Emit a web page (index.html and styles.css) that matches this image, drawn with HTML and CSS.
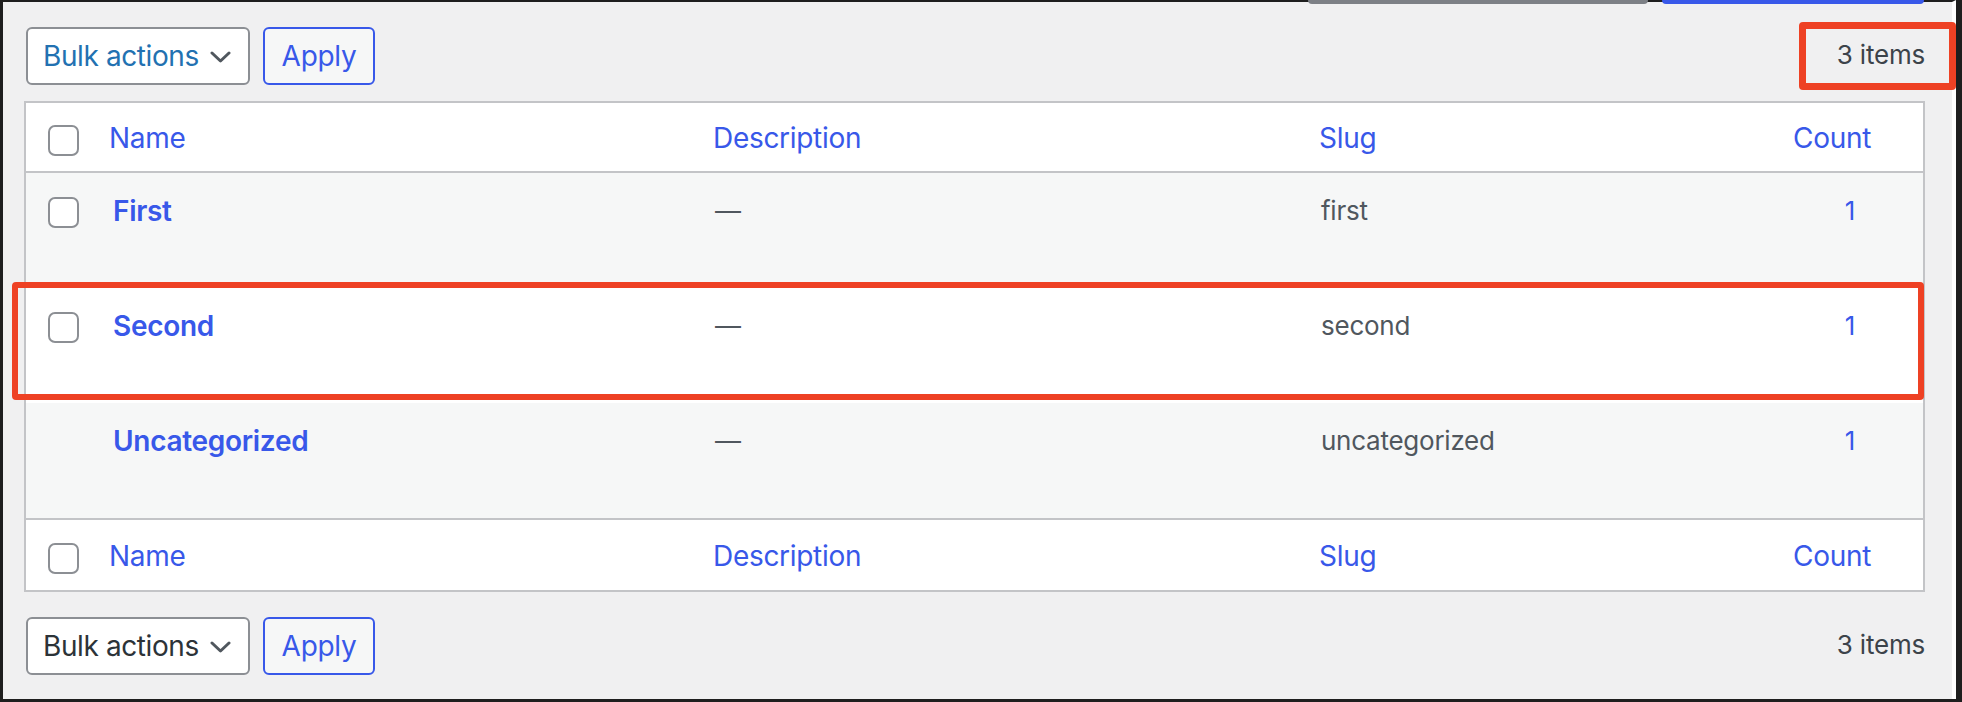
FILE: index.html
```html
<!DOCTYPE html>
<html lang="en">
<head>
<meta charset="utf-8">
<title>Categories</title>
<link rel="stylesheet" href="styles.css">
</head>
<body>
<div class="screen">
  <div class="search-row">
    <div class="search-input"></div>
    <div class="search-btn"></div>
  </div>

  <div class="tablenav tablenav-top">
    <div class="select select-hover">
      <span>Bulk actions</span>
      <svg class="chev" width="21" height="12" viewBox="0 0 21 12"><polyline points="2,2 10.5,10 19,2" fill="none" stroke="#50575e" stroke-width="3" stroke-linecap="round" stroke-linejoin="round"/></svg>
    </div>
    <div class="btn">Apply</div>
    <div class="count-num">3 items</div>
  </div>

  <table class="list">
    <colgroup>
      <col class="c-check"><col class="c-name"><col class="c-desc"><col class="c-slug"><col class="c-count">
    </colgroup>
    <thead>
      <tr>
        <th class="check"><span class="cb"></span></th>
        <th><a>Name</a></th>
        <th><a>Description</a></th>
        <th><a>Slug</a></th>
        <th class="num"><a>Count</a></th>
      </tr>
    </thead>
    <tbody>
      <tr class="alt">
        <td class="check"><span class="cb"></span></td>
        <td class="name"><a class="row-title">First</a></td>
        <td class="muted">—</td>
        <td class="muted">first</td>
        <td class="num"><a>1</a></td>
      </tr>
      <tr>
        <td class="check"><span class="cb"></span></td>
        <td class="name"><a class="row-title">Second</a></td>
        <td class="muted">—</td>
        <td class="muted">second</td>
        <td class="num"><a>1</a></td>
      </tr>
      <tr class="alt">
        <td class="check"></td>
        <td class="name"><a class="row-title">Uncategorized</a></td>
        <td class="muted">—</td>
        <td class="muted">uncategorized</td>
        <td class="num"><a>1</a></td>
      </tr>
    </tbody>
    <tfoot>
      <tr>
        <th class="check"><span class="cb"></span></th>
        <th><a>Name</a></th>
        <th><a>Description</a></th>
        <th><a>Slug</a></th>
        <th class="num"><a>Count</a></th>
      </tr>
    </tfoot>
  </table>

  <div class="tablenav tablenav-bottom">
    <div class="select">
      <span>Bulk actions</span>
      <svg class="chev" width="21" height="12" viewBox="0 0 21 12"><polyline points="2,2 10.5,10 19,2" fill="none" stroke="#50575e" stroke-width="3" stroke-linecap="round" stroke-linejoin="round"/></svg>
    </div>
    <div class="btn">Apply</div>
    <div class="count-num">3 items</div>
  </div>
</div>

<div class="mark mark-count"></div>
<div class="mark mark-row"></div>
</body>
</html>
```
FILE: styles.css
```css
* { box-sizing: border-box; }

html, body {
  margin: 0;
  padding: 0;
  background: #1e1e1e;
}

body {
  font-family: Inter, "Noto Sans", "Liberation Sans", sans-serif;
  width: 1962px;
  height: 702px;
  overflow: hidden;
}

.screen {
  margin: 0 6px 3px 3px;
  height: 699px;
  background: #f0f0f1;
  border-top: 2px solid #1e1e1e;
  border-right: 4px solid #ffffff;
  padding: 0 27px 0 21px;
}

.search-row {
  display: flex;
  justify-content: flex-end;
  gap: 14px;
  margin-top: -2px;
  margin-right: 1px;
  height: 4px;
}

.search-input {
  width: 340px;
  height: 4px;
  background: #7d8086;
  border-radius: 0 0 5px 5px;
}

.search-btn {
  width: 262px;
  height: 4px;
  background: #3858e9;
  border-radius: 0 0 5px 5px;
}

.tablenav {
  display: flex;
  align-items: center;
  gap: 13px;
  height: 58px;
  padding-left: 2px;
}

.tablenav-top { margin-top: 23px; }
.tablenav-bottom { margin-top: 25px; }

.select {
  width: 224px;
  height: 58px;
  display: flex;
  align-items: center;
  justify-content: space-between;
  padding: 0 17px 0 15px;
  background: #ffffff;
  border: 2px solid #8c8f94;
  border-radius: 6px;
  font-size: 28px;
  letter-spacing: -0.4px;
  color: #2c3338;
}

.select-hover { color: #2271b1; }

.chev { display: block; margin-top: 2px; }

.btn {
  width: 112px;
  height: 58px;
  display: flex;
  align-items: center;
  justify-content: center;
  background: #f6f7f7;
  border: 2px solid #3858e9;
  border-radius: 6px;
  font-size: 28px;
  letter-spacing: -0.3px;
  color: #3858e9;
}

.count-num {
  margin-left: auto;
  font-size: 26px;
  letter-spacing: -0.2px;
  color: #3c434a;
  margin-top: -3px;
}

.list {
  width: 100%;
  margin-top: 16px;
  table-layout: fixed;
  border-collapse: separate;
  border-spacing: 0;
  background: #ffffff;
  border: 2px solid #c3c4c7;
}

.c-check { width: 63px; }
.c-name { width: 604px; }
.c-desc { width: 606px; }
.c-slug { width: 474px; }
.c-count { width: 150px; }

.list th,
.list td {
  vertical-align: top;
  text-align: left;
  font-weight: 400;
  white-space: nowrap;
}

.list a { color: #3858e9; text-decoration: none; }

.list thead th {
  padding: 15px 10px 13px 20px;
  line-height: 40px;
  font-size: 28px;
  letter-spacing: -0.3px;
  border-bottom: 2px solid #c3c4c7;
}

.list tfoot th {
  padding: 16px 10px 14px 20px;
  line-height: 40px;
  font-size: 28px;
  letter-spacing: -0.3px;
  border-top: 2px solid #c3c4c7;
}

.list thead th.check { padding: 22px 0 0 22px; }
.list tfoot th.check { padding: 23px 0 0 22px; }

.list th.num { text-align: right; padding-right: 54px; }

.list tbody td {
  height: 115px;
  padding: 18px 10px 0 22px;
  line-height: 40px;
  font-size: 26px;
  letter-spacing: -0.25px;
  color: #50575e;
}

.list tbody td.check { padding: 24px 0 0 22px; }
.list tbody td.name { padding-left: 24px; font-size: 28px; }
.list tbody td.num { text-align: right; padding-right: 68px; }

.list tbody tr.alt td { background: #f6f7f7; }

.row-title {
  font-size: 28px;
  font-weight: 600;
  letter-spacing: -0.3px;
}

.cb {
  display: block;
  width: 31px;
  height: 31px;
  background: #ffffff;
  border: 2px solid #8c8f94;
  border-radius: 7px;
}

.mark {
  position: absolute;
  border: 7px solid #ee4124;
  border-radius: 4px;
}

.mark-count {
  left: 1799px;
  top: 22px;
  width: 157px;
  height: 68px;
}

.mark-row {
  left: 12px;
  top: 282px;
  width: 1912px;
  height: 118px;
  border-width: 6px;
}
```
